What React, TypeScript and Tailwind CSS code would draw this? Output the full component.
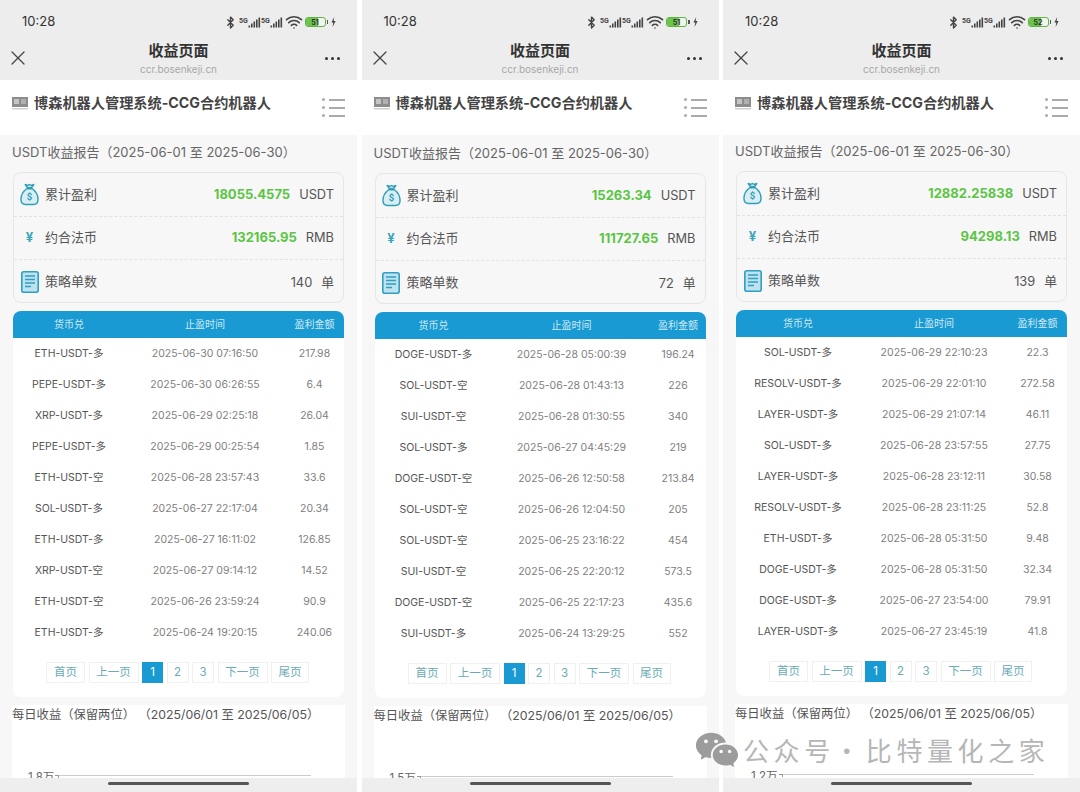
import { Bluetooth, Wifi, X } from "lucide-react";
import { RiWechatFill } from "react-icons/ri";

const CJK = "font-['Inter','Noto_Sans_CJK_SC',sans-serif]";

type Row = [string, string, string];

type Phone = {
  battery: string;
  bodyPad: string;
  profit: string;
  cny: string;
  orders: string;
  cols: string;
  axis: string;
  rows: Row[];
};

const phones: Phone[] = [
  {
    battery: "51",
    bodyPad: "pt-[7px]",
    profit: "18055.4575",
    cny: "132165.95",
    orders: "140",
    cols: "grid-cols-[112px_160px_59px]",
    axis: "1.8万",
    rows: [
      ["ETH-USDT-多", "2025-06-30 07:16:50", "217.98"],
      ["PEPE-USDT-多", "2025-06-30 06:26:55", "6.4"],
      ["XRP-USDT-多", "2025-06-29 02:25:18", "26.04"],
      ["PEPE-USDT-多", "2025-06-29 00:25:54", "1.85"],
      ["ETH-USDT-空", "2025-06-28 23:57:43", "33.6"],
      ["SOL-USDT-多", "2025-06-27 22:17:04", "20.34"],
      ["ETH-USDT-多", "2025-06-27 16:11:02", "126.85"],
      ["XRP-USDT-空", "2025-06-27 09:14:12", "14.52"],
      ["ETH-USDT-空", "2025-06-26 23:59:24", "90.9"],
      ["ETH-USDT-多", "2025-06-24 19:20:15", "240.06"],
    ],
  },
  {
    battery: "51",
    bodyPad: "pt-[8px]",
    profit: "15263.34",
    cny: "111727.65",
    orders: "72",
    cols: "grid-cols-[118px_158px_55px]",
    axis: "1.5万",
    rows: [
      ["DOGE-USDT-多", "2025-06-28 05:00:39", "196.24"],
      ["SOL-USDT-空", "2025-06-28 01:43:13", "226"],
      ["SUI-USDT-空", "2025-06-28 01:30:55", "340"],
      ["SOL-USDT-多", "2025-06-27 04:45:29", "219"],
      ["DOGE-USDT-空", "2025-06-26 12:50:58", "213.84"],
      ["SOL-USDT-空", "2025-06-26 12:04:50", "205"],
      ["SOL-USDT-空", "2025-06-25 23:16:22", "454"],
      ["SUI-USDT-空", "2025-06-25 22:20:12", "573.5"],
      ["DOGE-USDT-空", "2025-06-25 22:17:23", "435.6"],
      ["SUI-USDT-多", "2025-06-24 13:29:25", "552"],
    ],
  },
  {
    battery: "52",
    bodyPad: "pt-[6px]",
    profit: "12882.25838",
    cny: "94298.13",
    orders: "139",
    cols: "grid-cols-[124px_148px_59px]",
    axis: "1.2万",
    rows: [
      ["SOL-USDT-多", "2025-06-29 22:10:23", "22.3"],
      ["RESOLV-USDT-多", "2025-06-29 22:01:10", "272.58"],
      ["LAYER-USDT-多", "2025-06-29 21:07:14", "46.11"],
      ["SOL-USDT-多", "2025-06-28 23:57:55", "27.75"],
      ["LAYER-USDT-多", "2025-06-28 23:12:11", "30.58"],
      ["RESOLV-USDT-多", "2025-06-28 23:11:25", "52.8"],
      ["ETH-USDT-多", "2025-06-28 05:31:50", "9.48"],
      ["DOGE-USDT-多", "2025-06-28 05:31:50", "32.34"],
      ["DOGE-USDT-多", "2025-06-27 23:54:00", "79.91"],
      ["LAYER-USDT-多", "2025-06-27 23:45:19", "41.8"],
    ],
  },
];

function Signal() {
  return (
    <svg width="22" height="11" viewBox="0 0 22 11" className="text-[#444]">
      <text x="0" y="6" fontSize="7" fontWeight="700" fill="currentColor" fontFamily="Roboto">
        5G
      </text>
      <rect x="9.5" y="8.5" width="1.6" height="2" fill="currentColor" />
      <rect x="12" y="6.5" width="1.6" height="4" fill="currentColor" />
      <rect x="14.5" y="4.5" width="1.6" height="6" fill="currentColor" />
      <rect x="17" y="2.5" width="1.6" height="8" fill="currentColor" />
      <rect x="19.5" y="0.5" width="1.6" height="10" fill="currentColor" />
    </svg>
  );
}

function StatusIcons({ battery }: { battery: string }) {
  return (
    <div className="flex items-center">
      <Bluetooth size={13} strokeWidth={2.6} className="text-[#444] mr-[2px]" />
      <Signal />
      <Signal />
      <Wifi size={18} strokeWidth={2.2} className="text-[#444] ml-[2px] mr-[2px]" />
      <div className="relative w-[21px] h-[10px] rounded-[3px] border border-[#5eb540] overflow-hidden bg-[#f2f5ee]">
        <div className="absolute left-0 top-0 bottom-0 w-[12px] bg-[#6cc44c]" />
        <span className="absolute inset-0 flex items-center justify-center text-[7px] leading-none font-bold text-[#333]">
          {battery}
        </span>
      </div>
      <div className="w-[1.5px] h-[4px] bg-[#555] ml-[1px] mr-[3px]" />
      <svg width="5" height="10" viewBox="0 0 5 10" className="text-[#444]">
        <path d="M3.2 0 0.4 5.6h1.9L1.6 10l3-6H2.6z" fill="currentColor" />
      </svg>
    </div>
  );
}

function MoneyBag() {
  return (
    <svg width="19" height="23" viewBox="0 0 20 24" fill="none" stroke="#2f9fb8" strokeWidth="1.5">
      <path d="M5.5 1.5 7.5 4.5h5l2-3-2.5 1-2-1-2 1z" strokeLinejoin="round" />
      <path d="M7 6 C3 9 1 13 1 17 C1 20.5 3 22.5 6 22.5 H14 C17 22.5 19 20.5 19 17 C19 13 17 9 13 6 Z" fill="#d9eef3" strokeLinejoin="round" />
      <text x="10" y="18" textAnchor="middle" fontSize="10" fontWeight="700" fill="#2f9fb8" stroke="none" fontFamily="Roboto">
        $
      </text>
    </svg>
  );
}

function DocIcon() {
  return (
    <svg width="18" height="22" viewBox="0 0 18 22" fill="none">
      <rect x="0.8" y="0.8" width="16.4" height="20.4" rx="2" fill="#bfe3ee" stroke="#2f9fc4" strokeWidth="1.6" />
      <path d="M4 5h10M4 8.5h10M4 12h10M4 15.5h6" stroke="#2f9fc4" strokeWidth="1.4" />
    </svg>
  );
}

function SummaryRow({ icon, label, children, last }: { icon: React.ReactNode; label: string; children: React.ReactNode; last?: boolean }) {
  return (
    <div className={`flex items-center h-[43.7px] pl-[6px] pr-[9px] ${last ? "" : "border-b border-dashed border-[#e2e2e2]"}`}>
      <div className="w-[19px] flex justify-center">{icon}</div>
      <span className="ml-[6px] text-[13px] text-[#555]">{label}</span>
      <div className="ml-auto flex items-center text-[#555] text-[12.8px]">{children}</div>
    </div>
  );
}

function PageButton({ label, w, active }: { label: string; w: string; active?: boolean }) {
  return (
    <div
      className={`${w} h-[21px] flex items-center justify-center text-[11.5px] border ${
        active ? "bg-[#1a9ad2] border-[#1a9ad2] text-white" : "bg-white border-[#f0f0f0] text-[#69abb6]"
      }`}
    >
      {label}
    </div>
  );
}

function PhoneShot({ p }: { p: Phone }) {
  return (
    <div className={`w-[357px] h-[792px] shrink-0 flex flex-col bg-[#f7f7f7] relative overflow-hidden ${CJK}`}>
      {/* top bars */}
      <div className="h-[80px] bg-[#ededed] relative shrink-0">
        <div className="flex items-center justify-between pl-[22px] pr-[21px] pt-[12px] h-[32px]">
          <span className="text-[13px] text-[#333]">10:28</span>
          <StatusIcons battery={p.battery} />
        </div>
        <div className="flex flex-col items-center pt-[9px]">
          <span className="text-[15px] leading-[20px] font-bold text-[#333]">收益页面</span>
          <span className="text-[10px] leading-[12px] mt-[2px] text-[#a8a8a8]">ccr.bosenkeji.cn</span>
        </div>
        <X size={24} strokeWidth={1.3} className="absolute left-[6px] top-[46px] text-[#444]" />
        <div className="absolute right-[17px] top-[57px] flex gap-[3px]">
          <div className="w-[3px] h-[3px] rounded-full bg-[#333]" />
          <div className="w-[3px] h-[3px] rounded-full bg-[#333]" />
          <div className="w-[3px] h-[3px] rounded-full bg-[#333]" />
        </div>
      </div>
      <div className="h-[55px] bg-white shrink-0 flex items-start pl-[12px] pr-[12px] pt-[13px]">
        <svg width="16" height="15" viewBox="0 0 16 15" className="mt-[3px]">
          <rect x="0" y="1" width="16" height="10" fill="#8d8d8d" />
          <rect x="2" y="3" width="5" height="5" fill="#c4c4c4" />
          <rect x="9" y="3" width="5" height="5" fill="#b0b0b0" />
          <rect x="0" y="12" width="16" height="1.5" fill="#cfcfcf" />
        </svg>
        <span className="ml-[6px] text-[14.2px] leading-[20px] font-bold text-[#444]">博森机器人管理系统-CCG合约机器人</span>
        <div className="ml-auto mt-[5px] w-[23px] flex flex-col gap-[5px]">
          {[0, 1, 2].map((i) => (
            <div key={i} className="flex items-center gap-[4px]">
              <div className="w-[3px] h-[3px] rounded-full bg-[#aaa]" />
              <div className="flex-1 h-[2px] bg-[#aaa]" />
            </div>
          ))}
        </div>
      </div>

      {/* body */}
      <div className={`flex-1 px-[13px] ${p.bodyPad}`}>
        <div className="-ml-[1px] text-[13px] leading-[20px] text-[#666] whitespace-nowrap">USDT收益报告（2025-06-01 至 2025-06-30）</div>

        <div className="mt-[10px] h-[131px] rounded-[8px] border border-[#e6e6e6] bg-[#f7f7f7]">
          <SummaryRow icon={<MoneyBag />} label="累计盈利">
            <span className="text-[13px] font-bold text-[#5cc545]">{p.profit}</span>
            <span className="ml-[9px]">USDT</span>
          </SummaryRow>
          <SummaryRow icon={<span className="text-[13px] font-bold text-[#3aa6bb]">¥</span>} label="约合法币">
            <span className="text-[13px] font-bold text-[#5cc545]">{p.cny}</span>
            <span className="ml-[9px]">RMB</span>
          </SummaryRow>
          <SummaryRow icon={<DocIcon />} label="策略单数" last>
            <span>{p.orders}</span>
            <span className="ml-[9px]">单</span>
          </SummaryRow>
        </div>

        <div className="mt-[8px] w-[331px] h-[386px] rounded-[8px] bg-white overflow-hidden flex flex-col">
          <div className={`grid ${p.cols} h-[27px] items-center text-center bg-[#1a9ad2] text-[10px] text-[#cfeaf6]`}>
            <span>货币兑</span>
            <span>止盈时间</span>
            <span>盈利金额</span>
          </div>
          {p.rows.map((r) => (
            <div key={r[1] + r[0]} className={`grid ${p.cols} h-[31px] pt-[1px] items-center text-center text-[10.5px] text-[#555]`}>
              <span>{r[0]}</span>
              <span className="text-[#808080]">{r[1]}</span>
              <span className="text-[#808080]">{r[2]}</span>
            </div>
          ))}
          <div className="flex justify-center gap-[3.5px] pt-[14px] pr-[2px]">
            <PageButton label="首页" w="w-[39px]" />
            <PageButton label="上一页" w="w-[50px]" />
            <PageButton label="1" w="w-[21px]" active />
            <PageButton label="2" w="w-[22px]" />
            <PageButton label="3" w="w-[22px]" />
            <PageButton label="下一页" w="w-[50px]" />
            <PageButton label="尾页" w="w-[38px]" />
          </div>
        </div>

        <div className="mt-[8px] -mx-[1px] bg-white h-[100px] relative">
          <div className="text-[12.3px] leading-[18px] pt-[1px] text-[#555] whitespace-pre">每日收益（保留两位） （2025/06/01 至 2025/06/05）</div>
          <div className="flex items-start pl-[16px] pr-[34px] mt-[46px]">
            <span className="text-[11.5px] leading-[14px] text-[#666]">{p.axis}</span>
            <div className="w-[4px] h-[3px] ml-[1px] border-t border-r border-[#999] mt-[5px]" />
            <div className="flex-1 h-px bg-[#ccc] mt-[5px]" />
          </div>
        </div>
      </div>

      {/* home bar */}
      <div className="absolute left-0 right-0 bottom-0 h-[14px] bg-[#eeeeee] flex justify-center pt-[4px]">
        <div className="w-[141px] h-[3px] rounded-full bg-[#555]" />
      </div>
    </div>
  );
}

export default function App() {
  return (
    <div className="w-[1080px] h-[792px] bg-white relative overflow-hidden flex gap-[4.5px]">
      {phones.map((p) => (
        <PhoneShot key={p.profit} p={p} />
      ))}
      {/* watermark */}
      <div className="absolute left-[694px] top-[725px] flex items-center text-[#b6b6b6] text-[26px] leading-[50px] tracking-[4.6px] font-['Noto_Sans_CJK_SC',sans-serif]">
        <RiWechatFill size={46} className="text-[#9c9c9c] shrink-0" />
        <span className="ml-[3px] whitespace-nowrap shrink-0">公众号</span>
        <span className="-ml-[1px] w-[32px] shrink-0 whitespace-nowrap">·</span>
        <span className="whitespace-nowrap shrink-0">比特量化之家</span>
      </div>
    </div>
  );
}
